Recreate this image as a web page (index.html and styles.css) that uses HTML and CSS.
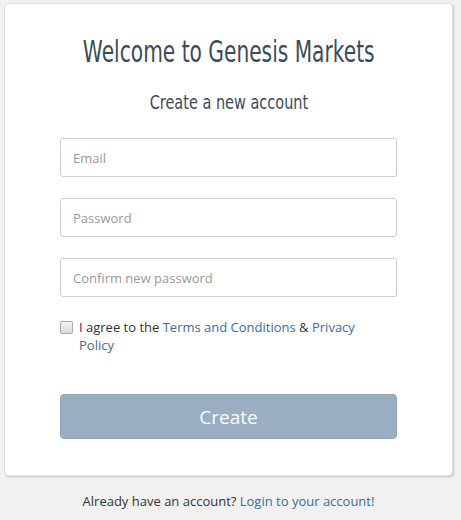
FILE: index.html
```html
<!DOCTYPE html>
<html>
<head>
<meta charset="utf-8">
<link rel="stylesheet" href="styles.css">
</head>
<body>
<div class="card">
  <h1 class="title"><span class="squeeze">Welcome to Genesis Markets</span></h1>
  <h2 class="subtitle"><span class="squeeze sub">Create a new account</span></h2>
  <form class="form">
    <input class="field" type="email" placeholder="Email">
    <input class="field" type="password" placeholder="Password">
    <input class="field" type="password" placeholder="Confirm new password">
    <label class="agree">
      <span class="box"></span>
      <span class="agree-text">I agree to the <a href="#">Terms and Conditions</a> &amp; <a href="#">Privacy Policy</a></span>
    </label>
    <button class="btn" type="button">Create</button>
  </form>
</div>
<p class="footer">Already have an account? <a href="#">Login to your account!</a></p>
</body>
</html>
```
FILE: styles.css
```css
html, body {
  margin: 0;
  padding: 0;
  background: #f1f1f1;
}
body {
  padding: 3px 8px 0 4px;
  font-family: "Open Sans", "Liberation Sans", sans-serif;
  color: #333;
}
.card {
  box-sizing: border-box;
  width: 449px;
  background: #fff;
  border: 1px solid #e0e0e0;
  border-radius: 4px;
  box-shadow: 1px 1px 2px rgba(0,0,0,0.18);
  padding: 30px 55px 36px;
}
.title,
.subtitle {
  display: flex;
  justify-content: center;
  white-space: nowrap;
  margin: 0;
  font-family: "DejaVu Sans", sans-serif;
  font-weight: normal;
  color: #3b4b5b;
}
.title {
  font-size: 30px;
  line-height: 36px;
}
.subtitle {
  margin-top: 20px;
  font-size: 19px;
  line-height: 24px;
}
.squeeze {
  display: block;
  flex: none;
  transform: scaleX(0.673);
  transform-origin: center;
}
.squeeze.sub {
  transform: scaleX(0.763);
}
.form {
  display: flex;
  flex-direction: column;
  gap: 21px;
  margin-top: 24px;
}
.field {
  display: block;
  width: 100%;
  box-sizing: border-box;
  height: 39px;
  border: 1px solid #cfcfcf;
  border-radius: 3px;
  padding: 0 12px;
  font-family: "Open Sans", sans-serif;
  font-size: 13px;
  color: #555;
  outline: none;
}
.field::placeholder {
  color: #9a9a9a;
}
.agree {
  display: flex;
  align-items: flex-start;
  gap: 6px;
  margin-top: 0;
  font-size: 13px;
  line-height: 18px;
  color: #333;
}
.box {
  flex: none;
  width: 11px;
  height: 11px;
  margin-top: 3px;
  border: 1px solid #aaa;
  border-radius: 2px;
  background: linear-gradient(#f4f4f4, #dcdcdc);
}
.agree-text {
  padding-right: 40px;
}
a {
  color: #3d6b96;
  text-decoration: none;
}
.btn {
  margin-top: 19px;
  height: 45px;
  width: 100%;
  border: 1px solid #8fa4b8;
  border-radius: 4px;
  background: #9aaec1;
  color: #fff;
  font-family: "Open Sans", sans-serif;
  font-size: 19px;
}
.footer {
  margin: 16px 0 0;
  text-align: center;
  font-size: 13px;
  line-height: 18px;
  color: #333;
}
```
